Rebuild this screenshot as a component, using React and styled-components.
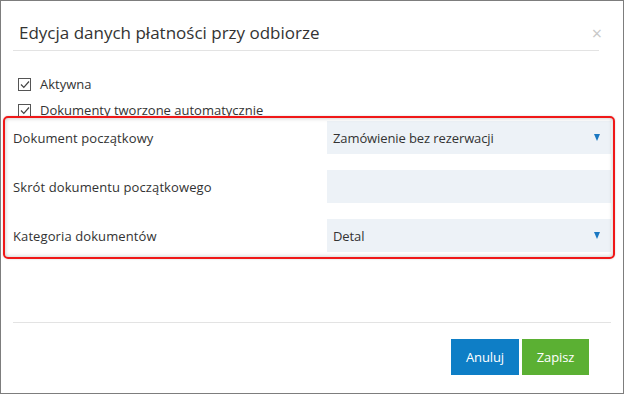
import styled, { createGlobalStyle } from "styled-components";

const GlobalStyle = createGlobalStyle`
  body {
    margin: 0;
    background: #ffffff;
    font-family: "Open Sans", "Noto Sans", sans-serif;
    color: #333333;
  }
`;

const Modal = styled.div`
  width: 624px;
  height: 394px;
  box-sizing: border-box;
  border: 1px solid #7d7d7d;
  background: #ffffff;
  display: flex;
  flex-direction: column;
`;

const Header = styled.div`
  display: flex;
  align-items: center;
  justify-content: space-between;
  height: 49px;
  margin: 0 24px 0 12px;
  border-bottom: 1px solid #e3e3e3;
`;

const Title = styled.h1`
  margin: 0 0 0 6px;
  padding-top: 14px;
  font-size: 17px;
  font-weight: 400;
  letter-spacing: 0;
  color: #333333;
`;

const Close = styled.span`
  margin-top: 14px;
  margin-right: -3px;
  font-size: 18px;
  color: #c8c8c8;
  line-height: 1;
`;

const Body = styled.div`
  padding: 20px 12px 0 12px;
  flex: 1;
`;

const CheckRow = styled.label`
  display: flex;
  align-items: center;
  gap: 9px;
  height: 26px;
  margin-left: 5px;
  font-size: 13px;
  letter-spacing: 0;
`;

const Box = styled.span`
  width: 11px;
  height: 11px;
  border: 1px solid #555555;
  display: flex;
  align-items: center;
  justify-content: center;
`;

const Form = styled.div`
  position: relative;
  display: flex;
  flex-direction: column;
  gap: 16px;
  margin-top: -2px;
`;

const Highlight = styled.div`
  position: absolute;
  left: -10px;
  right: -4px;
  top: -5px;
  bottom: -7px;
  border: 2px solid #f01818;
  border-radius: 5px;
  box-shadow: inset 0 0 4px rgba(0, 0, 0, 0.25), 0 0 2px rgba(0, 0, 0, 0.2);
  pointer-events: none;
`;

const Row = styled.div`
  display: grid;
  grid-template-columns: 314px 1fr;
  align-items: center;
`;

const Label = styled.span`
  font-size: 13px;
  letter-spacing: 0.1px;
  color: #333333;
`;

const Field = styled.div`
  height: 33px;
  background: #edf2f7;
  display: flex;
  align-items: center;
  justify-content: space-between;
  padding: 0 11px 0 6px;
  font-size: 13px;
  letter-spacing: -0.1px;
  color: #333333;
`;

const Arrow = styled.span`
  width: 0;
  height: 0;
  border-left: 3.5px solid transparent;
  border-right: 3.5px solid transparent;
  border-top: 7px solid #1a78c2;
`;

const Footer = styled.div`
  box-sizing: border-box;
  margin: 0 12px;
  border-top: 1px solid #e3e3e3;
  height: 71px;
  display: flex;
  justify-content: flex-end;
  align-items: flex-start;
  gap: 3px;
  padding: 16px 22px 0 0;
`;

const Button = styled.button`
  border: none;
  height: 36px;
  width: ${(p) => p.$w}px;
  background: ${(p) => p.$bg};
  color: #ffffff;
  font-family: "Open Sans", "Noto Sans", sans-serif;
  font-size: 13px;
  letter-spacing: -0.1px;
  padding: 0;
`;

const Check = () => (
  <svg width="10" height="9" viewBox="0 0 10 9">
    <path d="M1 4.5 L3.8 7.3 L9 1.5" fill="none" stroke="#444" strokeWidth="1.2" />
  </svg>
);

const Select = ({ value }) => (
  <Field>
    <span>{value}</span>
    <Arrow />
  </Field>
);

export default function App() {
  return (
    <>
      <GlobalStyle />
      <Modal>
        <Header>
          <Title>Edycja danych płatności przy odbiorze</Title>
          <Close>×</Close>
        </Header>
        <Body>
          <CheckRow>
            <Box>
              <Check />
            </Box>
            Aktywna
          </CheckRow>
          <CheckRow>
            <Box>
              <Check />
            </Box>
            Dokumenty tworzone automatycznie
          </CheckRow>
          <Form>
            <Row>
              <Label>Dokument początkowy</Label>
              <Select value="Zamówienie bez rezerwacji" />
            </Row>
            <Row>
              <Label>Skrót dokumentu początkowego</Label>
              <Field />
            </Row>
            <Row>
              <Label>Kategoria dokumentów</Label>
              <Select value="Detal" />
            </Row>
            <Highlight />
          </Form>
        </Body>
        <Footer>
          <Button $w={68} $bg="#0e7ec6">Anuluj</Button>
          <Button $w={67} $bg="#5bb033">Zapisz</Button>
        </Footer>
      </Modal>
    </>
  );
}
